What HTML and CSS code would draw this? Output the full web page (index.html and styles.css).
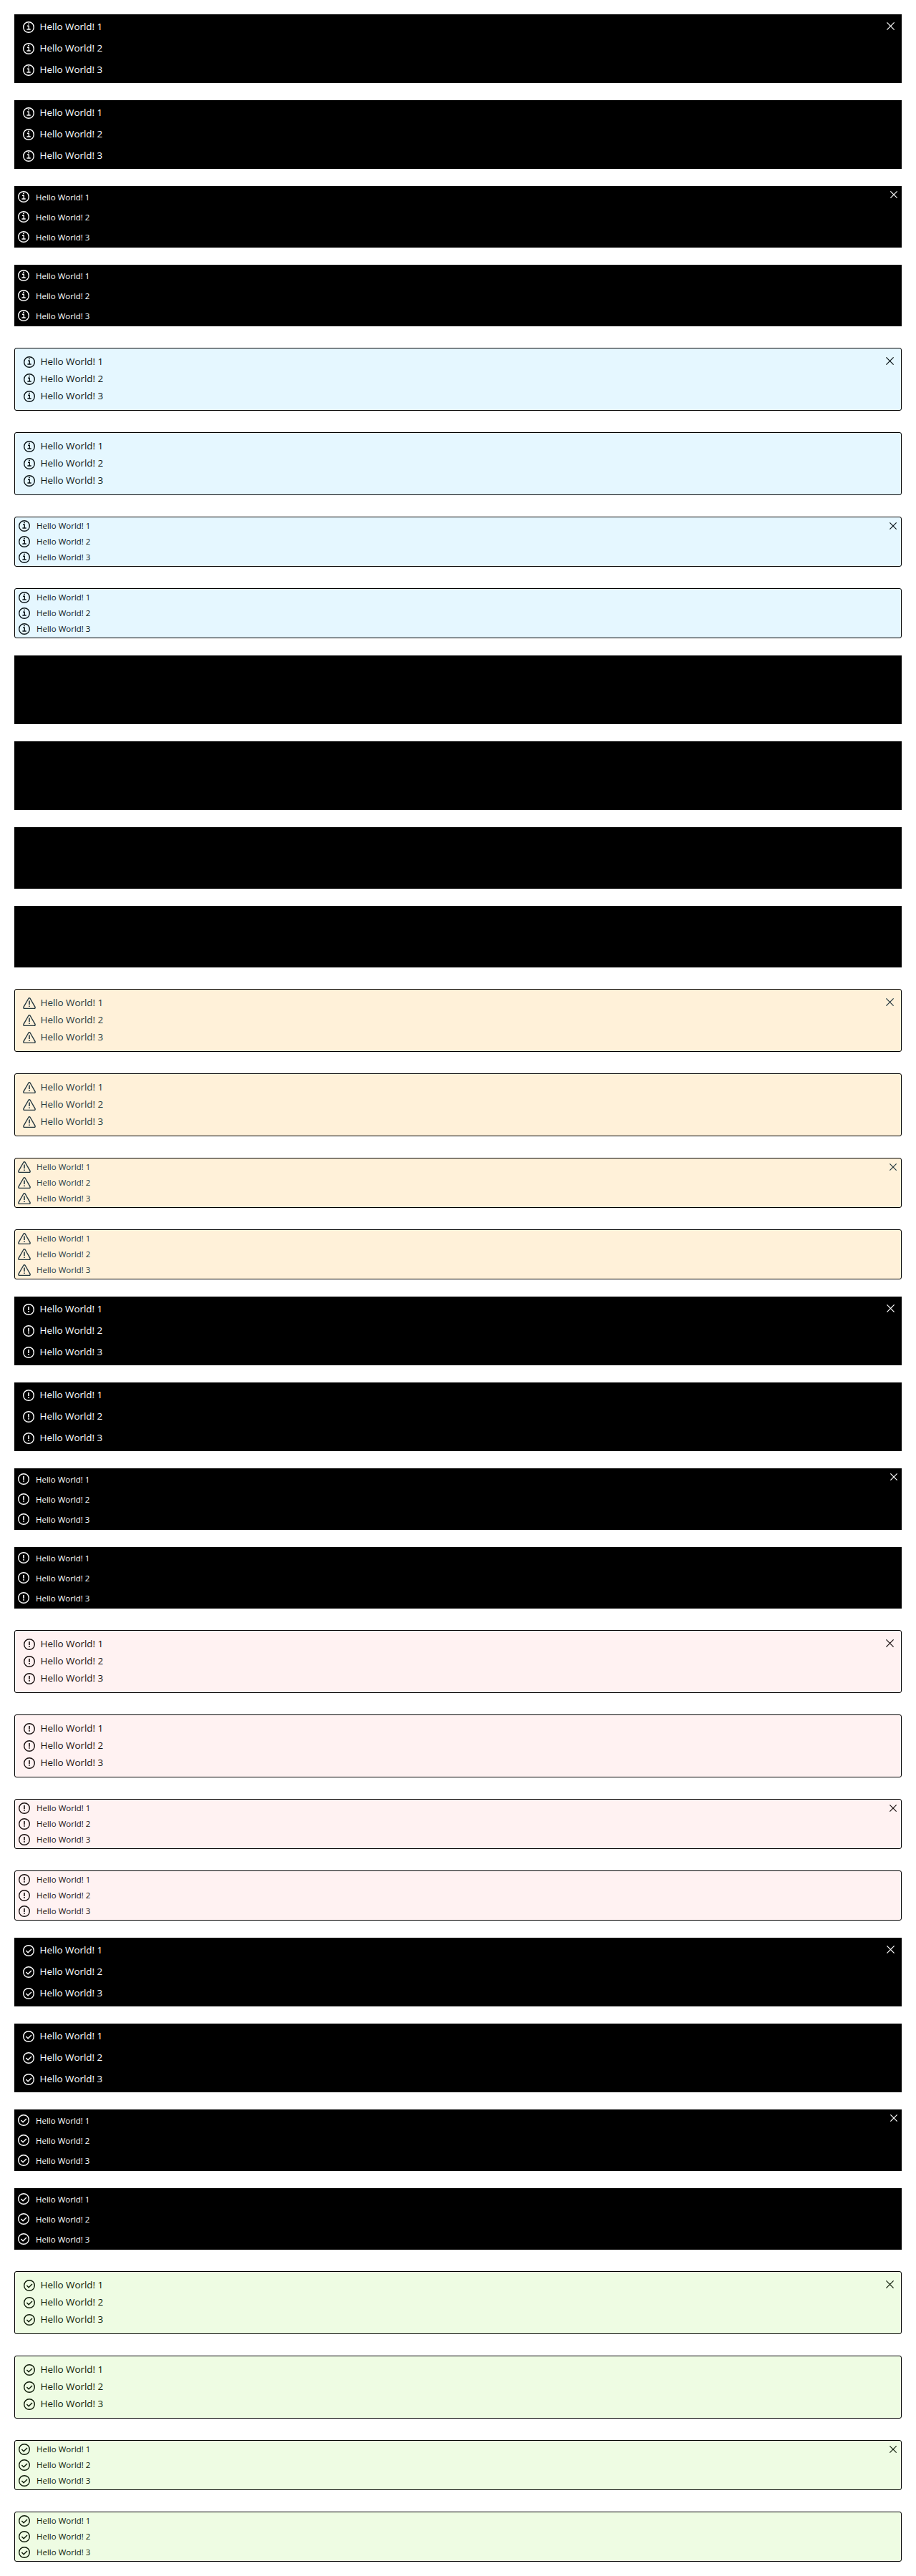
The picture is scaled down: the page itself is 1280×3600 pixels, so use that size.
FILE: index.html
```html
<!DOCTYPE html>
<html lang="en">
<head>
<meta charset="utf-8">
<title>Alerts</title>
<link rel="stylesheet" href="styles.css">
</head>
<body>
<svg class="sprite" aria-hidden="true">
  <symbol id="info" viewBox="0 0 16 16"><circle cx="8" cy="8" r="7.3"/><path d="M7.1 3.5h1.8M6 6.2h2.3v4.7M5.4 11h5.3"/></symbol>
  <symbol id="warning" viewBox="0 0 16 16"><path d="M6.8 1.5Q8-.3 9.2 1.5L16 13.3Q16.6 15.3 14.8 15.4H1.2Q-.6 15.3 0 13.3Z"/><path d="M8 4.6v5.3M8 11.4v1.6" class="mark"/></symbol>
  <symbol id="error" viewBox="0 0 16 16"><circle cx="8" cy="8" r="7.3"/><path d="M8 4v5M8 10.1v1.7" class="mark"/></symbol>
  <symbol id="success" viewBox="0 0 16 16"><circle cx="8" cy="8" r="7.3"/><path d="M4.4 8.1l2.7 2.7 4.9-4.9"/></symbol>
  <symbol id="close" viewBox="0 0 11 11"><path d="M.4.4l10.2 10.2M10.6.4L.4 10.6"/></symbol>
</svg>
<main class="page" id="page"></main>
<script src="alerts.js"></script>
</body>
</html>
```
FILE: styles.css
```css
body {
  margin: 0;
  background: #fff;
  font-family: "Open Sans", "Noto Sans", sans-serif;
}
.sprite { display: none; }
.page {
  display: flex;
  flex-direction: column;
  gap: 24px;
  padding: 20px;
}
.alert {
  display: flex;
  justify-content: space-between;
  align-items: flex-start;
  box-sizing: border-box;
  padding: 3px 10px 3px 12px;
  background: #000;
  color: #fff;
  font-size: 13.5px;
  letter-spacing: -.07px;
}
.alert.warning { color: #000; }
.messages { margin: 0; padding: 0; list-style: none; }
.message {
  display: flex;
  align-items: center;
  gap: 7.5px;
  height: 30px;
  white-space: nowrap;
}
.text { line-height: 18px; padding-bottom: 2px; }
.icon {
  width: 16px;
  height: 16px;
  overflow: visible;
  fill: none;
  stroke: currentColor;
  stroke-width: 1.4;
}
.icon symbol, .sprite symbol { overflow: visible; }
.mark { stroke-width: 1.6; }
.close {
  display: flex;
  margin: 8px 0 0;
  padding: 0;
  border: 0;
  background: none;
  color: inherit;
}
.close .icon { width: 11px; height: 11px; stroke-width: 1.25; }

.small {
  padding: 1px 6px 1px 5px;
  font-size: 11.5px;
  letter-spacing: 0;
}
.small .message { height: 28px; gap: 9px; }
.small .text { padding: 1px 0 0; }
.small .close { margin-top: 6px; }
.small .close .icon { width: 10px; height: 10px; stroke-width: 1.35; }

.light {
  margin-top: 6px;
  padding-top: 7px;
  padding-bottom: 7px;
  border: 1px solid #000;
  border-radius: 3px;
}
.light .message { height: 24px; }
.light .close { margin-top: 5px; }
.light.small { padding-top: 1px; padding-bottom: 1px; }
.light.small .message { height: 22px; }
.light.small .text { padding-top: 0; }
.light.small .close { margin-top: 6px; }

.light.info { background: #e5f7ff; color: #0a1418; }
.light.warning { background: #fff1d9; color: #253840; }
.light.error { background: #fff2f2; color: #180f0f; }
.light.success { background: #eefce3; color: #0c1a07; }
```
FILE: alerts.js
```js
const use = (id) => `<svg class="icon"><use href="#${id}"/></svg>`;
const message = (type, n) =>
  `<li class="message">${use(type)}<span class="text">Hello World! ${n}</span></li>`;

let html = "";
for (const type of ["info", "warning", "error", "success"]) {
  for (const tone of ["dark", "light"]) {
    for (const size of ["large", "small"]) {
      for (const closable of [true, false]) {
        html += `<section class="alert ${type} ${tone} ${size}">
          <ul class="messages">${[1, 2, 3].map((n) => message(type, n)).join("")}</ul>
          ${closable ? `<button class="close" aria-label="Close">${use("close")}</button>` : ""}
        </section>`;
      }
    }
  }
}
document.getElementById("page").innerHTML = html;
```
